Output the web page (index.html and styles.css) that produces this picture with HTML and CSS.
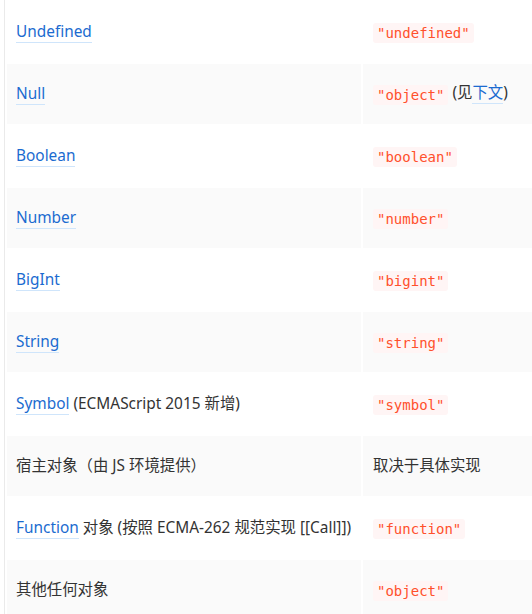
FILE: index.html
```html
<!DOCTYPE html>
<html lang="zh-CN">
<head>
<meta charset="utf-8">
<title>typeof</title>
<link rel="stylesheet" href="styles.css">
</head>
<body>
<div class="wrap">
<table class="types">
<tbody>
<tr><td class="c1"><a href="#">Undefined</a></td><td class="c2"><code>"undefined"</code></td></tr>
<tr><td class="c1"><a href="#">Null</a></td><td class="c2"><code>"object"</code> (见<a href="#">下文</a>)</td></tr>
<tr><td class="c1"><a href="#">Boolean</a></td><td class="c2"><code>"boolean"</code></td></tr>
<tr><td class="c1"><a href="#">Number</a></td><td class="c2"><code>"number"</code></td></tr>
<tr><td class="c1"><a href="#">BigInt</a></td><td class="c2"><code>"bigint"</code></td></tr>
<tr><td class="c1"><a href="#">String</a></td><td class="c2"><code>"string"</code></td></tr>
<tr><td class="c1"><a href="#">Symbol</a> (ECMAScript 2015 新增)</td><td class="c2"><code>"symbol"</code></td></tr>
<tr><td class="c1">宿主对象（由 JS 环境提供）</td><td class="c2">取决于具体实现</td></tr>
<tr><td class="c1"><a href="#">Function</a> 对象 (按照 ECMA-262 规范实现 [[Call]])</td><td class="c2"><code>"function"</code></td></tr>
<tr><td class="c1">其他任何对象</td><td class="c2"><code>"object"</code></td></tr>
</tbody>
</table>
</div>
</body>
</html>
```
FILE: styles.css
```css
html, body {
  margin: 0;
  padding: 0;
  overflow: hidden;
  background: #fff;
}
body {
  font-family: "Noto Sans", "Noto Sans CJK SC", sans-serif;
  font-size: 15.4px;
  color: #333;
}
.wrap {
  margin-left: 4px;
  border-left: 1px solid #eaeaea;
  min-height: 614px;
  overflow: hidden;
}
.types {
  border-collapse: separate;
  border-spacing: 2px;
  width: 529px;
  table-layout: fixed;
}
.types td {
  height: 60px;
  padding: 0 9px 1px;
  vertical-align: middle;
  white-space: nowrap;
  line-height: 24px;
  box-sizing: border-box;
}
.types td.c1 { width: 354px; }
.types td.c2 { padding-left: 10px; padding-right: 0; }
.types tr:nth-child(even) td { background: #fafafa; }
a {
  color: #1b6bd0;
  text-decoration: none;
  border-bottom: 1px solid #cfe5fb;
}
code {
  font-family: "DejaVu Sans Mono", monospace;
  font-size: 14px;
  color: #ff502c;
  background: #fff5f5;
  padding: 2px 4px;
  border-radius: 3px;
  vertical-align: -2px;
}
```
